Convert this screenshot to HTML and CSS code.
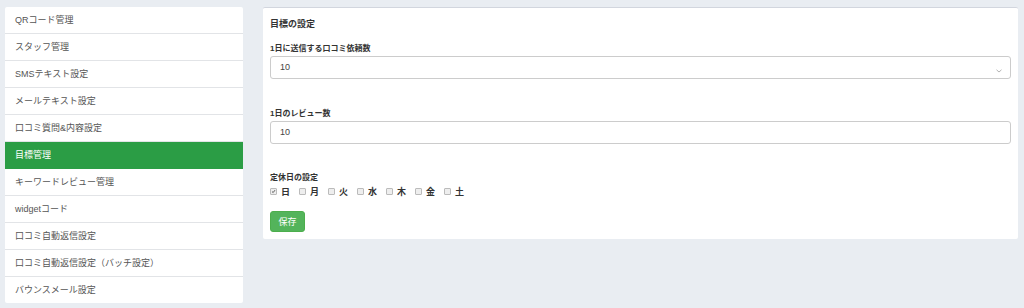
FILE: index.html
```html
<!DOCTYPE html>
<html lang="ja">
<head>
    <meta charset="UTF-8">
    <meta name="viewport" content="width=device-width, initial-scale=1.0">
    <title>目標管理</title>
    <link rel="stylesheet" href="styles.css">
</head>
<body>
    <div class="wrapper">
        <ul class="side-menu">
            <li>QRコード管理</li>
            <li>スタッフ管理</li>
            <li>SMSテキスト設定</li>
            <li>メールテキスト設定</li>
            <li>口コミ質問&amp;内容設定</li>
            <li class="active">目標管理</li>
            <li>キーワードレビュー管理</li>
            <li>widgetコード</li>
            <li>口コミ自動返信設定</li>
            <li>口コミ自動返信設定（バッチ設定）</li>
            <li>バウンスメール設定</li>
        </ul>

        <div class="box">
            <h3 class="box-title">目標の設定</h3>

            <div class="form-group">
                <label class="field-label">1日に送信する口コミ依頼数</label>
                <div class="select-wrap">
                    <div class="form-control">10</div>
                    <svg class="caret" width="6" height="4" viewBox="0 0 6 4"><path d="M0.5 0.8 L3 3 L5.5 0.8" fill="none" stroke="#aaa" stroke-width="0.9"/></svg>
                </div>
            </div>

            <div class="form-group">
                <label class="field-label">1日のレビュー数</label>
                <div class="form-control">10</div>
            </div>

            <div class="form-group">
                <label class="field-label">定休日の設定</label>
                <div class="days">
                    <label class="day"><span class="check checked"><svg width="7" height="7" viewBox="0 0 7 7"><path d="M1.5 3.6 L3 5 L5.6 1.6" fill="none" stroke="#333" stroke-width="1.1"/></svg></span>日</label>
                    <label class="day"><span class="check"></span>月</label>
                    <label class="day"><span class="check"></span>火</label>
                    <label class="day"><span class="check"></span>水</label>
                    <label class="day"><span class="check"></span>木</label>
                    <label class="day"><span class="check"></span>金</label>
                    <label class="day"><span class="check"></span>土</label>
                </div>
            </div>

            <button class="btn-save">保存</button>
        </div>
    </div>
</body>
</html>
```

FILE: styles.css
```css
* {
    margin: 0;
    padding: 0;
    box-sizing: border-box;
    font-family: 'Liberation Sans', 'Noto Sans CJK JP', sans-serif;
}

body {
    background-color: #e9edf2;
    padding: 7px 6px 0 5px;
}

.wrapper {
    display: flex;
    align-items: flex-start;
    gap: 20px;
}

.side-menu {
    list-style: none;
    width: 238px;
    flex-shrink: 0;
    background-color: white;
    border-radius: 2px;
}

.side-menu li {
    height: 27px;
    line-height: 26px;
    padding-left: 10px;
    font-size: 9px;
    color: #555;
    border-bottom: 1px solid #e2e4e7;
}

.side-menu li:last-child {
    border-bottom: none;
    height: 26px;
}

.side-menu li.active {
    background-color: #2b9d45;
    color: white;
    border-bottom-color: #2b9d45;
}

.box {
    flex: 1;
    background-color: white;
    border-top: 1px solid #d2d6de;
    border-radius: 2px;
    padding: 9px 7px 7px 7px;
}

.box-title {
    font-size: 9px;
    line-height: 14px;
    color: #333;
    font-weight: bold;
    margin-bottom: 12px;
}

.form-group {
    margin-bottom: 29px;
}

.form-group:nth-of-type(2) {
    margin-bottom: 28px;
}

.form-group:nth-of-type(3) {
    margin-bottom: 14px;
}

.field-label {
    display: block;
    font-size: 8px;
    line-height: 12px;
    font-weight: bold;
    color: #333;
    margin-bottom: 1px;
}

.form-control {
    height: 23px;
    line-height: 21px;
    border: 1px solid #ccc;
    border-radius: 3px;
    padding-left: 9px;
    font-size: 9px;
    color: #444;
}

.select-wrap {
    position: relative;
}

.caret {
    position: absolute;
    right: 9px;
    bottom: 6px;
}

.days {
    display: flex;
    height: 12px;
    margin-top: 1px;
    align-items: center;
}

.day {
    display: flex;
    align-items: center;
    width: 29px;
    font-size: 9px;
    font-weight: bold;
    color: #333;
}

.check {
    width: 7px;
    height: 7px;
    border: 1px solid #bbb;
    background-color: #eee;
    border-radius: 1px;
    margin-right: 4px;
    display: flex;
    align-items: center;
    justify-content: center;
}

.check svg {
    display: block;
}

.btn-save {
    display: block;
    width: 35px;
    height: 21px;
    background-color: #53b45b;
    border: 1px solid #4cae4c;
    border-radius: 3px;
    color: white;
    font-size: 9px;
}
```
